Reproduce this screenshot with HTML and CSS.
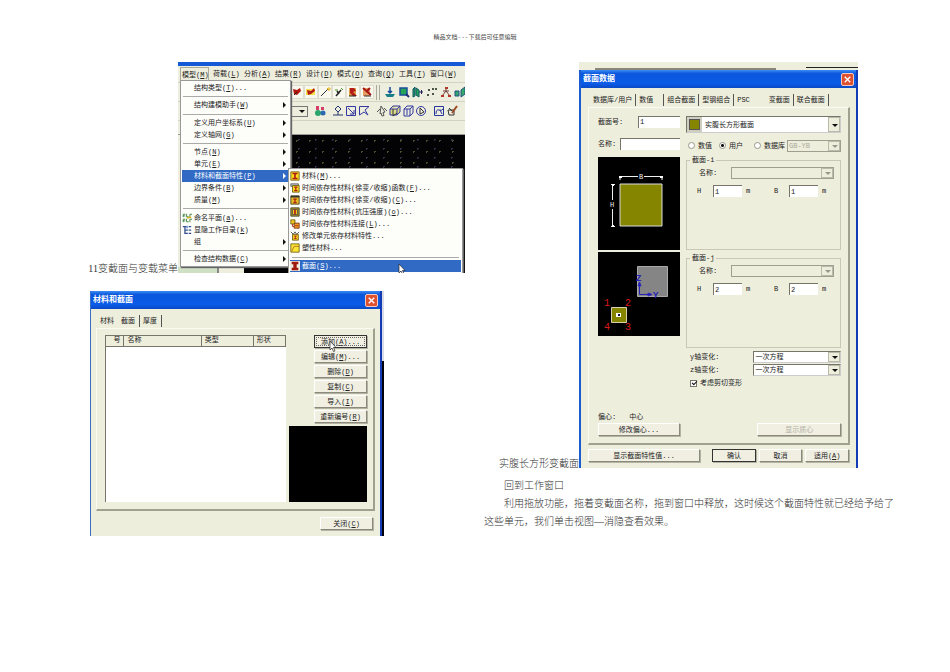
FILE: index.html
```
<!DOCTYPE html>
<html lang="zh-CN">
<head>
<meta charset="utf-8">
<title>变截面与变截面菜单</title>
<link rel="stylesheet" href="styles.css">
</head>
<body>
<header class="page-head">精品文档---下载后可任意编辑</header>
<main class="page">
  <section class="col col-left">
    <div class="figure-row">
      <p class="caption caption-a">11变截面与变载菜单</p>
      <div class="app">
        <div class="app-strip"></div>
        <nav class="menubar">
          <button class="open">模型(<u>M</u>)</button><button>荷载(<u>L</u>)</button><button>分析(<u>A</u>)</button><button>结果(<u>R</u>)</button><button>设计(<u>D</u>)</button><button>模式(<u>O</u>)</button><button>查询(<u>Q</u>)</button><button>工具(<u>T</u>)</button><button>窗口(<u>W</u>)</button>
        </nav>
        <div class="toolbar">
          <span class="tools boxed">
            <svg viewBox="0 0 12 12"><path d="M2 3l4 1 3-2 1 3-4 4-3-1z" fill="#b01810"/><path d="M3 9l3-3" stroke="#321"/></svg>
            <svg viewBox="0 0 12 12"><path d="M1 3h9v6H1z" fill="#f5e04a"/><path d="M2 4l4 1 3-3 1 3-4 3-3 1z" fill="#b01810"/></svg>
            <svg viewBox="0 0 12 12"><path d="M2 10l7-7" stroke="#333"/><path d="M8 2l2 2M10 1v4M8 3h4" stroke="#e8b820"/></svg>
            <svg viewBox="0 0 12 12"><path d="M3 10l5-6M4 5l2 3" stroke="#222" stroke-width="1.5"/><path d="M2 4h3M8 2l2 2" stroke="#4a9a28"/></svg>
            <svg viewBox="0 0 12 12"><path d="M2 2h7v8H2z" fill="#e0a040"/><path d="M3 2h4l2 3-3 1 4 4H6L3 7z" fill="#b31c18"/><path d="M2 10h7" stroke="#222"/></svg>
            <svg viewBox="0 0 12 12"><path d="M2 2h7v8H2z" fill="#e89b60"/><path d="M2 2l8 7M9 2L5 6" stroke="#a51616" stroke-width="2"/><path d="M3 10h7" stroke="#333"/></svg>
          </span>
          <i class="grip"></i>
          <span class="tools">
            <svg viewBox="0 0 12 12"><path d="M6 1v6M4 5l2 2 2-2" stroke="#124a9c" fill="none" stroke-width="1.5"/><path d="M1 8h10l-2 3H3z" fill="#167f87"/></svg>
            <svg viewBox="0 0 12 12"><path d="M2 2h7v7H2z" fill="#24a457" stroke="#194c9c" stroke-width="1.5"/><path d="M8 8l3 3" stroke="#1c2c7a" stroke-width="2"/></svg>
            <svg viewBox="0 0 12 12"><path d="M1 3l2-2v9l-2 1zM4 2l3 2v7l-3-2z" fill="#20a65b" stroke="#156"/><path d="M7 6h4M9.500 4v4" stroke="#225"/></svg>
            <svg viewBox="0 0 12 12"><path d="M2 3h2v2H2zM6 2h2v2H6zM9 2h2v2H9zM1 8h2v2H1zM6 7h2v2H6z" fill="#4b5648"/></svg>
            <svg viewBox="0 0 12 12"><path d="M6 1v4L2 10M6 5l4 5M3 5h6" stroke="#713d38" fill="none"/><path d="M1 9h3v2H1zM8 9h3v2H8zM5 1h3v2H5z" fill="#b33529"/></svg>
            <svg viewBox="0 0 12 12"><path d="M1 5h4v5H1zM7 4l4-3v7l-4 3z" fill="#35a96b" stroke="#235083"/></svg>
          </span>
        </div>
        <div class="toolbar">
          <button class="arrow-button" aria-label="展开"></button>
          <span class="tools tools-line">
            <svg class="wide" viewBox="0 0 12 12"><path d="M2 1h3v4H2zM7 2h3v3H7z" fill="#d63c69"/><circle cx="4" cy="8" r="3" fill="#28a56a"/><circle cx="9" cy="8" r="2.5" fill="#2c68b0"/></svg>
            <svg viewBox="0 0 12 12"><path d="M6 1L3 4l3 3 3-3zM6 7v3M1 10h10" stroke="#27366f" fill="none"/></svg>
            <svg viewBox="0 0 12 12"><path d="M1.500 1.500h9v9h-9zM3 3l6 6M9 5v4H5" stroke="#3438a0" fill="none"/></svg>
            <svg class="wide" viewBox="0 0 12 12"><path d="M1.500 10V1.500H11L7 5l3 5-4-3z" stroke="#3438a0" fill="none"/></svg>
            <svg viewBox="0 0 12 12"><path d="M5 1l4 6-2 .500 1 3-2 .5-1-3-1 1zM1 7l3-3M8 3l3 3" stroke="#555" fill="none"/></svg>
            <svg viewBox="0 0 12 12"><path d="M1 4l3-3h7v6l-3 3H1zM1 4h7l3-3M8 4v6" stroke="#3438a0" fill="#dfdc88"/><path d="M4 4v7l4-3" fill="none" stroke="#333"/></svg>
            <svg viewBox="0 0 12 12"><path d="M2 4l3-3h6v7l-3 3H2zM2 4h6l3-3M8 4v7M5 4v6" stroke="#3438a0" fill="none"/></svg>
            <svg class="wide" viewBox="0 0 12 12"><circle cx="6" cy="6" r="4.500" stroke="#3438a0" fill="none"/><path d="M5 3v6l4-2z" stroke="#333" fill="none"/></svg>
            <svg viewBox="0 0 12 12"><path d="M1.500 1.500h9v9h-9zM3 9q0-5 3-4t4-1M7 5l2 4" stroke="#27369a" fill="none"/></svg>
            <svg viewBox="0 0 12 12"><path d="M2 5h6v5H3zM3 3l3 3" stroke="#333" fill="none"/><path d="M11 1L6 8" stroke="#9c4a22" stroke-width="2"/></svg>
          </span>
        </div>
        <div class="toolbar-rest"></div>
        <div class="canvas"></div>
        <div class="app-foot"><span></span><i></i></div>

        <div class="menu menu-main">
          <button class="item">结构类型(<u>T</u>)...</button>
          <hr>
          <button class="item more">结构建模助手(<u>W</u>)</button>
          <hr>
          <button class="item more">定义用户坐标系(<u>U</u>)</button>
          <button class="item more">定义轴网(<u>G</u>)</button>
          <hr>
          <button class="item more">节点(<u>N</u>)</button>
          <button class="item more">单元(<u>E</u>)</button>
          <button class="item more chosen">材料和截面特性(<u>P</u>)</button>
          <button class="item more">边界条件(<u>B</u>)</button>
          <button class="item more">质量(<u>M</u>)</button>
          <hr>
          <button class="item"><svg viewBox="0 0 12 12"><path d="M1.500 5V1.500H4M1.500 3.500H4M5.500 1v3.500H8M9.500 5V1.500H12M1.500 11V7.500H4M1.500 9.500H4M5.500 7v3.500H8M9.500 11V7.500H12" stroke="#28762a" fill="none"/><path d="M6 6l5-1" stroke="#d7b321" stroke-width="2"/></svg>命名平面(<u>a</u>)...</button>
          <button class="item"><svg viewBox="0 0 12 12"><path d="M1 2h4M3.500 2v8H7M3 6h4M8 2h3M8 6h3M8 10h3" stroke="#334f91" fill="none" stroke-width="1.500"/><path d="M5 1h2v3H5z" fill="#6d8fd0"/></svg>显隐工作目录(<u>k</u>)</button>
          <button class="item more">组</button>
          <hr>
          <button class="item more">检查结构数据(<u>C</u>)</button>
        </div>

        <div class="menu menu-sub">
          <button class="item"><svg viewBox="0 0 12 12"><path d="M1 1h10v10H1z" fill="#f8dc20" stroke="#6b5a10"/><path d="M3 3h6M3 9h6M6 3v6" stroke="#b21d10" stroke-width="2"/></svg>材料(<u>M</u>)...</button>
          <button class="item"><svg viewBox="0 0 12 12"><path d="M1 1h9v3H1z" fill="#b9c6cc" stroke="#555"/><path d="M3 3h8v8H3z" fill="#f8dc20" stroke="#6b5a10"/><path d="M5 5h4M5 9h4M7 5v4" stroke="#b21d10" stroke-width="1.500"/></svg>时间依存性材料(徐变/收缩)函数(<u>F</u>)...</button>
          <button class="item"><svg viewBox="0 0 12 12"><path d="M1 1h10v10H1z" fill="#e0bb25" stroke="#3f3c20"/><path d="M1 2h10" stroke="#333" stroke-width="2"/><path d="M4 5h4M4 9h4M6 5v4" stroke="#b21d10" stroke-width="1.500"/></svg>时间依存性材料(徐变/收缩)(<u>C</u>)...</button>
          <button class="item"><svg viewBox="0 0 12 12"><path d="M1 1h10v10H1z" fill="#a3922b" stroke="#3f3c20"/><path d="M3 3h6v6H3z" fill="#f0cb20" stroke="#555"/><path d="M6 3v6" stroke="#b21d10" stroke-width="2"/></svg>时间依存性材料(抗压强度)(<u>o</u>)...</button>
          <button class="item"><svg viewBox="0 0 12 12"><path d="M1 1h5v5H1z" fill="#f0cb20" stroke="#6b5a10"/><path d="M5 5h6v6H5z" fill="#f0a420" stroke="#6b2a10"/><path d="M3 6v3h2M6 8h4" stroke="#b21d10" fill="none"/></svg>时间依存性材料连接(<u>L</u>)...</button>
          <button class="item"><svg viewBox="0 0 12 12"><path d="M3 4h7v7H3z" fill="#f0cb20" stroke="#6b5a10"/><path d="M1 1l3 3 2-3 2 3 3-3" stroke="#444" fill="none"/><path d="M5 6h3M5 9h3M6.500 6v3" stroke="#b21d10"/></svg>修改单元依存材料特性...</button>
          <button class="item"><svg viewBox="0 0 12 12"><path d="M1 1h10v10H1z" fill="#fae634" stroke="#6b5a10"/><path d="M2 10l3-6h6" stroke="#b2651d" fill="none"/></svg>塑性材料...</button>
          <hr>
          <button class="item chosen"><svg viewBox="0 0 12 12"><path d="M0 0h12v12H0z" fill="#f0eee0"/><path d="M2 1h8v3H8v4h2v3H2V8h2V4H2z" fill="#a11a10"/></svg>截面(<u>S</u>)...</button>
          <svg class="pointer" viewBox="0 0 8 12"><path d="M1 1v9l2-2 1.500 3.500 1.500-.7L4.500 7.500H7z" fill="#fff" stroke="#222" stroke-width=".7"/></svg>
        </div>
      </div>
    </div>

    <div class="shot shot-list">
      <section class="dialog">
        <div class="titlebar"><h2>材料和截面</h2><button class="close" aria-label="关闭"><svg viewBox="0 0 12 12"><path d="M3 3l6 6M9 3l-6 6" stroke="#fff" stroke-width="1.500"/></svg></button></div>
        <div class="tabs"><button>材料</button><button class="current">截面</button><button class="edge">厚度</button></div>
        <div class="panel list-panel">
          <div class="list-box">
            <table class="list">
              <thead><tr><th class="c-no">号</th><th class="c-name">名称</th><th class="c-type">类型</th><th>形状</th></tr></thead>
              <tbody></tbody>
            </table>
          </div>
          <div class="side">
            <button class="btn default focus">添加(<u>A</u>)...</button>
            <button class="btn">编辑(<u>M</u>)...</button>
            <button class="btn">删除(<u>D</u>)</button>
            <button class="btn">复制(<u>C</u>)</button>
            <button class="btn">导入(<u>I</u>)</button>
            <button class="btn">重新编号(<u>R</u>)</button>
            <div class="black"></div>
            <svg class="pointer" viewBox="0 0 8 12"><path d="M1 1v9l2-2 1.500 3.500 1.500-.7L4.500 7.500H7z" fill="#fff" stroke="#222" stroke-width=".7"/></svg>
          </div>
        </div>
        <div class="list-foot"><button class="btn">关闭(<u>C</u>)</button></div>
      </section>
      <div class="behind"><i></i></div>
    </div>
  </section>

  <section class="col col-right">
    <div class="figure-row">
      <p class="caption caption-b">实腹长方形变截面</p>
      <div class="shot-data">
        <div class="back-window"><i></i><b></b></div>
        <section class="dialog data-dialog">
          <div class="titlebar"><h2>截面数据</h2><button class="close" aria-label="关闭"><svg viewBox="0 0 12 12"><path d="M3 3l6 6M9 3l-6 6" stroke="#fff" stroke-width="1.500"/></svg></button></div>
          <div class="tabs data-tabs"><button class="edge">数据库/用户</button><button class="edge spaced">数值</button><button class="edge">组合截面</button><button class="edge">型钢组合</button><button class="psc">PSC</button><button class="edge current">变截面</button><button class="edge">联合截面</button></div>
          <form class="panel data-panel">
            <div class="left-side">
              <div class="field"><label for="sec-no">截面号:</label><input id="sec-no" class="no" value="1"></div>
              <div class="field second"><label for="sec-name">名称:</label><input id="sec-name" class="name"></div>
              <svg class="preview one" viewBox="0 0 82 93">
                <path d="M22 27h42v42H22z" fill="#858500" stroke="#ddd"/>
                <path d="M22 23v-4M64 23v-4M22 19.500h18M46 19.500h18M17 27.500h-4M17 69.500h-4M14.500 27v16M14.500 52v17" stroke="#eee" fill="none"/>
                <path d="M21 19h3v2h-3zM62 19h3v2h-3zM14 27h2v2h-2zM14 68h2v2h-2z" fill="#fff"/>
                <text x="41" y="22" class="dim">B</text><text x="12" y="50" class="dim">H</text>
              </svg>
              <svg class="preview two" viewBox="0 0 82 84">
                <path d="M39.500 14.500h30v30h-30z" fill="#858585" stroke="#aaa"/>
                <path d="M41.500 31v11.500H53M40 34l1.500-4 1.500 4zM50 41l4 1.500-4 1.500z" stroke="#2622b8" fill="none"/>
                <text x="38" y="29" class="axis">Z</text><text x="55" y="46" class="axis">Y</text>
                <path d="M13.500 55.500h15v15h-15z" fill="#858500" stroke="#d8d0b0"/>
                <path d="M18 61h5v4h-5z" fill="#fff"/><path d="M20 62h2v2h-2z" fill="#113"/>
                <text x="6" y="54" class="corner">1</text><text x="27" y="54" class="corner">2</text><text x="6" y="78" class="corner">4</text><text x="27" y="78" class="corner">3</text>
              </svg>
              <div class="offset"><span>偏心:</span><span>中心</span></div>
              <button type="button" class="btn">修改偏心...</button>
            </div>
            <div class="right-side">
              <div class="combo shape"><i class="swatch"></i><select aria-label="截面形状"><option>实腹长方形截面</option></select></div>
              <div class="radios">
                <label><input type="radio" name="src">数值</label>
                <label><input type="radio" name="src" checked>用户</label>
                <label><input type="radio" name="src">数据库</label>
                <div class="combo off"><select aria-label="标准" disabled><option>GB-YB</option></select></div>
              </div>
              <fieldset>
                <legend>截面-i</legend>
                <div class="group-name"><label for="ni">名称:</label><div class="combo off"><select id="ni" disabled></select></div></div>
                <div class="sizes"><label for="hi">H</label><input id="hi" value="1"><span>m</span><label for="bi">B</label><input id="bi" value="1"><span>m</span></div>
              </fieldset>
              <fieldset>
                <legend>截面-j</legend>
                <div class="group-name"><label for="nj">名称:</label><div class="combo off"><select id="nj" disabled></select></div></div>
                <div class="sizes"><label for="hj">H</label><input id="hj" value="2"><span>m</span><label for="bj">B</label><input id="bj" value="2"><span>m</span></div>
              </fieldset>
              <div class="vary"><label for="vy">y轴变化:</label><div class="combo"><select id="vy"><option>一次方程</option></select></div></div>
              <div class="vary"><label for="vz">z轴变化:</label><div class="combo"><select id="vz"><option>一次方程</option></select></div></div>
              <label class="check"><input type="checkbox" checked>考虑剪切变形</label>
              <button type="button" class="btn centroid" disabled>显示质心</button>
            </div>
          </form>
          <div class="data-foot"><button class="btn show">显示截面特性值...</button><button class="btn default">确认</button><button class="btn">取消</button><button class="btn">适用(<u>A</u>)</button></div>
        </section>
      </div>
    </div>
    <div class="prose">
      <p>回到工作窗口</p>
      <p>利用拖放功能，拖着变截面名称，拖到窗口中释放，这时候这个截面特性就已经给予给了这些单元，我们单击视图—消隐查看效果。</p>
    </div>
  </section>
</main>
</body>
</html>
```
FILE: styles.css
```
* { box-sizing: border-box; }
body {
  margin: 0;
  background: #fff;
  color: #222;
  font: 7px/12px "Liberation Mono", "Noto Sans CJK SC", monospace;
}
p, h2 { margin: 0; }
button, input, select { font: inherit; color: inherit; margin: 0; padding: 0; border: 0; border-radius: 0; background: none; }
svg { display: block; flex: none; }
u { text-underline-offset: 1px; }

.page-head { padding: 32px 0 18px; text-align: center; font-size: 6px; color: #444; }
.page { display: grid; grid-template-columns: minmax(0, 377fr) minmax(0, 412fr); gap: 19px; padding: 0 54px 20px 88px; }
.figure-row { display: flex; align-items: flex-end; }
.caption, .prose { font: 10px/18px "Liberation Serif", "Noto Sans CJK SC", serif; font-weight: 300; color: #333; }
.caption { flex: none; line-height: 8px; white-space: nowrap; text-align: right; }
.caption-a { width: 90px; }
.caption-b { width: 95px; }

/* application window with open menus */
.app { position: relative; flex: 1; min-width: 0; height: 211px; display: flex; flex-direction: column; overflow: hidden; background: #eeeede; }
.app-strip { height: 4px; background: #1559d6; }
.menubar { display: grid; grid-auto-flow: column; grid-auto-columns: 31px; justify-content: start; align-items: center; height: 17px; padding-left: 2px; border-bottom: 1px solid #d4d2c2; }
.menubar button { height: 14px; white-space: nowrap; text-align: left; padding: 0 2px; }
.menubar .open { border: 1px solid #aaa99c; border-bottom: 0; width: 29px; padding: 0 1px; }
.toolbar { display: flex; align-items: center; height: 19px; padding-left: 113px; border-bottom: 1px solid #d4d2c2; overflow: hidden; }
.tools { display: flex; flex: none; gap: 2px; }
.tools svg { width: 12px; height: 12px; }
.tools-line { gap: 1px; }
.boxed svg { background: #f8f8ef; outline: 1px solid #deddcf; }
.grip { width: 4px; height: 15px; margin: 0 4px 0 3px; border: solid #aaa99c; border-width: 0 1px; flex: none; }
.arrow-button { display: flex; justify-content: flex-end; align-items: center; width: 17px; height: 11px; padding-right: 2px; flex: none; border: 1px solid #777; background: #eeeede; margin-right: 6px; }
.arrow-button::after { content: ""; border: solid transparent; border-width: 3px 3px 0; border-top-color: #111; }
.tools .wide { margin-right: 5px; }
.toolbar-rest { height: 14px; border-bottom: 1px solid #999; }
.canvas {
  flex: 1;
  margin-left: 112px;
  background-color: #030306;
  background-image: radial-gradient(circle, #4c4c2c 0 1px, transparent 1px), radial-gradient(circle, #303044 0 1px, transparent 1px);
  background-size: 13px 11px, 17px 9px;
}
.app-foot { display: flex; height: 6px; background: #030306; }
.app-foot span { width: 39px; background: #cfe0c5; }
.app-foot i { width: 27px; background: #eeeede; border-left: 2px solid #888; }

.menu { position: absolute; display: flex; flex-direction: column; padding: 1px; background: #fdfdfa; border: 1px solid #999; box-shadow: 1px 1px 1px #666; }
.menu-main { left: 2px; top: 18px; width: 111px; height: 187px; }
.menu-sub { left: 110px; top: 106px; width: 175px; height: 105px; border-bottom: 0; }
.item { position: relative; display: flex; align-items: center; height: 12px; flex: none; padding-left: 12px; white-space: nowrap; text-align: left; }
.item svg { width: 10px; height: 10px; margin: 0 2px 0 -12px; }
.menu hr { flex: 1; width: 98%; margin: 0 auto; border: 0; background: linear-gradient(#aaa, #aaa) center / 100% 1px no-repeat; }
.chosen { background: #316ac5; color: #fff; }
.more::after { content: ""; position: absolute; right: 3px; top: 3px; border: solid transparent; border-width: 3px 0 3px 3px; border-left-color: #111; }
.chosen.more::after { border-left-color: #fff; }
.pointer { position: absolute; width: 8px; height: 12px; z-index: 3; }
.menu-sub .pointer { left: 109px; bottom: -2px; }

/* dialogs */
.dialog { background: #eeeedd; border-left: 1px solid #3a6fc8; border-right: 2px solid #123bb5; }
.titlebar { display: flex; align-items: center; justify-content: space-between; height: 18px; padding: 0 2px; background: linear-gradient(#3b8cf5, #0b57dc 20%, #0a5be8 75%, #0a49c4); color: #fff; }
.titlebar h2 { font-size: 8px; font-weight: 700; }
.close { width: 13px; height: 13px; border: 1px solid #f3c9bd; border-radius: 2px; background: #dd5130; }
.close svg { width: 11px; height: 11px; }
.tabs { display: flex; align-items: flex-end; }
.tabs button { height: 12px; white-space: nowrap; }
.tabs .edge { border-right: 1px solid #555; }
.panel { border: solid; border-width: 1px 2px 2px 1px; border-color: #fbfbf4 #a19f8e #a19f8e #fbfbf4; }
.btn { height: 13px; background: #f0efe2; border: 1px solid; border-color: #fff #8b897b #8b897b #fff; box-shadow: 1px 1px 0 #b5b3a4; line-height: 10px; white-space: nowrap; text-align: center; }
.btn.default { border-color: #333; }
.btn.focus { outline: 1px dotted #666; outline-offset: -3px; }
.btn:disabled { color: #b3b1a2; }

.shot-list { display: flex; width: 78%; margin: 18px 0 0 2px; }
.shot-list .dialog { flex: 1; min-width: 0; padding-bottom: 6px; }
.shot-list .tabs { height: 19px; padding: 0 9px 1px; gap: 7px; }
.shot-list .current { border-right: 1px solid #555; padding-right: 4px; }
.shot-list .edge { padding-right: 4px; margin-left: -4px; }
.list-panel { display: flex; gap: 3px; margin: 0 5px; padding: 6px 6px 7px 8px; height: 183px; }
.list-box { flex: 1; min-width: 0; background: #fff; border: solid #77756a; border-width: 1px 0 0 1px; }
.list { width: 100%; border-collapse: collapse; table-layout: fixed; }
.list th { height: 10px; padding: 0 3px; line-height: 9px; font-weight: 400; text-align: left; background: #eeeedd; border: solid #77756a; border-width: 0 1px 1px 0; }
.list .c-no { width: 10%; text-align: right; }
.list .c-name { width: 43%; }
.list .c-type { width: 29%; }
.side { position: relative; display: flex; flex-direction: column; align-items: flex-end; gap: 2px; width: 78px; }
.side .btn { width: 53px; }
.side .black { flex: 1; width: 100%; background: #000; margin-top: 1px; }
.side .pointer { left: 40px; top: 5px; }
.list-foot { display: flex; justify-content: flex-end; padding: 6px 7px 0; }
.list-foot .btn { width: 53px; }
.behind { width: 2px; background: #02020a; }
.behind i { display: block; height: 70px; background: #d9dbe8; }

.shot-data { flex: 1; min-width: 0; margin-right: 38px; }
.back-window { display: flex; align-items: flex-end; justify-content: space-between; height: 8px; padding: 0 0 0 16px; background: #eeeedd; }
.back-window i { width: 69%; height: 2px; background: #88867a; }
.back-window b { width: 52px; height: 3px; border-top: 1px solid #222; }
.data-dialog { border-left-width: 2px; padding-bottom: 6px; border-left-color: #1b5dd0; }
.data-tabs { height: 19px; padding: 0 12px 1px; gap: 3px; }
.data-tabs button { padding-right: 3px; }
.data-tabs .spaced { padding-right: 10px; }
.data-tabs .psc { padding-right: 16px; }
.data-panel { display: grid; grid-template-columns: 82px minmax(0, 1fr); gap: 6px; margin: 0 6px 0 7px; padding: 7px 7px 7px 9px; height: 338px; }
.left-side, .right-side { display: flex; flex-direction: column; min-width: 0; }
input { height: 12px; min-width: 0; padding: 0 1px; background: #fff; border: solid #77756a; border-width: 1px 0 0 1px; }
.field { display: flex; align-items: center; justify-content: space-between; height: 13px; }
.field .no { width: 42px; }
.field .name { width: 60px; }
.second { margin-top: 9px; }
.preview { width: 82px; background: #000; }
.preview.one { height: 93px; margin-top: 7px; }
.preview.two { height: 84px; margin-top: 2px; }
.dim { font-size: 7px; fill: #eee; }
.axis { font-size: 9px; font-weight: 700; fill: #2622b8; }
.corner { font-size: 10px; fill: #d81818; }
.offset { display: flex; gap: 13px; margin-top: auto; }

.combo { position: relative; display: flex; height: 12px; background: #fff; border: 1px solid #77756a; border-right-color: #ccc; border-bottom-color: #ccc; }
.combo select { appearance: none; flex: 1; min-width: 0; padding: 0 1px; outline: 0; line-height: 10px; }
.combo::before { content: ""; position: absolute; right: 0; top: 0; bottom: 0; width: 10px; background: #eeeedd; border: 1px solid #bbb9aa; pointer-events: none; }
.combo::after { content: ""; position: absolute; right: 2px; top: 50%; margin-top: -1px; border: solid transparent; border-width: 3px 3px 0; border-top-color: #111; pointer-events: none; }
.off { background: #eeeedd; border-color: #a09e90; }
.off::after { border-top-color: #99978a; }
.off select { color: #aaa899; opacity: 1; }
.shape { height: 17px; margin-top: 1px; }
.shape .swatch { width: 15px; border: 2px solid #cfcdc0; background: #858500; outline: 1px solid #555; outline-offset: -3px; }
.shape select { padding-left: 3px; }
.radios { display: flex; align-items: center; gap: 5px; height: 13px; margin-top: 6px; padding-left: 2px; }
.radios label, .check { display: flex; align-items: center; gap: 3px; white-space: nowrap; }
.radios label { margin-right: 2px; }
.radios label:nth-child(2) { margin-right: 6px; }
.radios label:nth-child(3) { margin-right: -3px; }
.radios input { appearance: none; width: 7px; height: 7px; flex: none; border: 1px solid #99978a; border-radius: 50%; background: #fff; }
.radios input:checked { background: radial-gradient(#111 0 1px, #fff 2px); }
.radios .combo { flex: 1; }
fieldset { min-width: 0; height: 95px; margin: 3px 0 0; padding: 2px 6px 0 10px; border: 1px solid #c9c7b8; }
legend { margin-left: -7px; padding: 0 2px; line-height: 10px; }
.group-name { display: flex; align-items: center; justify-content: space-between; padding-left: 2px; }
.group-name .combo { width: 76%; }
.sizes { display: grid; grid-template-columns: 16px 29px 32px 15px 29px 1fr; align-items: center; margin-top: 6px; }
.sizes span { padding-left: 4px; }
.vary { display: flex; align-items: center; justify-content: space-between; height: 12px; margin-top: 1px; padding-left: 4px; }
fieldset + .vary { margin-top: 3px; }
.vary .combo { width: 58%; }
.check { padding: 1px 0 0 4px; }
.check input { appearance: none; position: relative; width: 7px; height: 7px; border: 1px solid #77756a; padding: 0; }
.check input:checked::after { content: ""; position: absolute; left: 1px; top: 0; width: 4px; height: 2px; border: solid #111; border-width: 0 0 1px 1px; transform: rotate(-45deg); }
.centroid { width: 54%; margin: auto 0 0 auto; }
.data-foot { display: flex; gap: 3px; padding: 4px 7px 0; }
.data-foot .btn { flex: 43; }
.data-foot .show { flex: 114; margin-right: 9px; }

.prose { margin-top: 9px; text-indent: 20px; }
```
